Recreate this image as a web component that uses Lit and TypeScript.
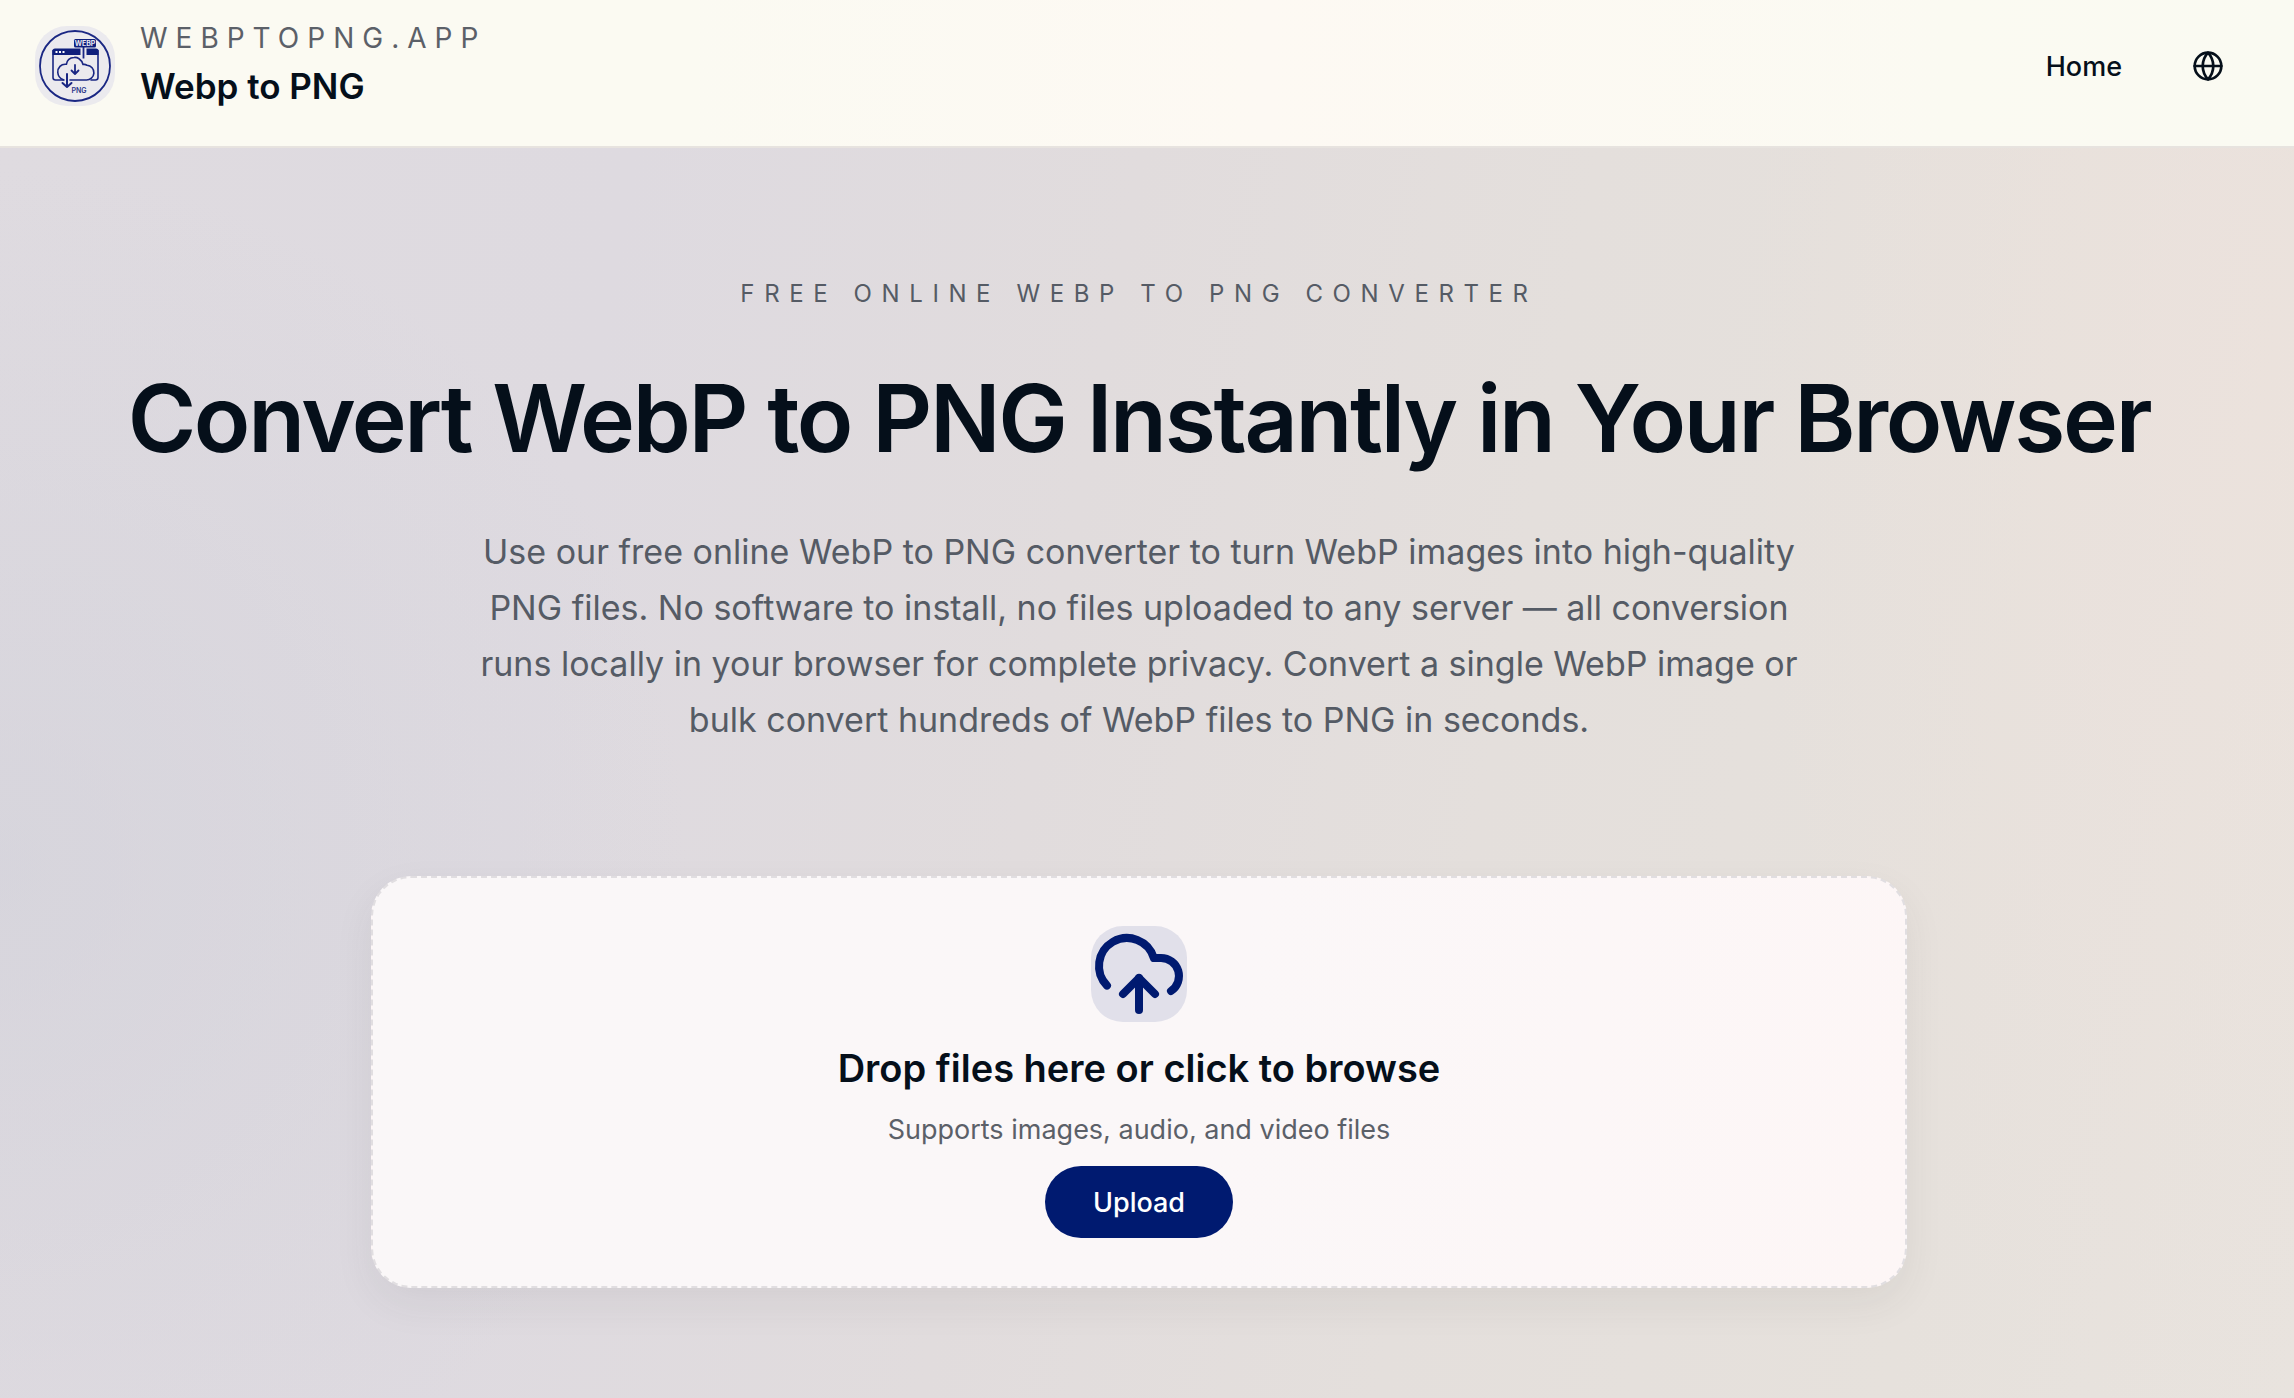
import { LitElement, html, css, svg } from "lit";
import { customElement } from "lit/decorators.js";

const logo = svg`
  <circle cx="40" cy="40" r="35" fill="none" stroke="#1a2783" stroke-width="1.8" />
  <g fill="none" stroke="#1a2783" stroke-width="1.6" stroke-linecap="round" stroke-linejoin="round">
    <path d="M29 54H20.500a2.500 2.500 0 0 1-2.500-2.500V24.500M63 24.500V51.500a2.500 2.500 0 0 1-2.500 2.500H56" />
    <path d="M35 54H51a7.200 7.200 0 0 0 1-14.800A6 6 0 0 0 48 38.500C46.500 33 42 31 39 31.500c-4 .2-7 3-7.600 6.800C26 37.500 22.500 42 22.800 46.500c.2 3.200 2.200 6 5.500 7.200" />
    <path d="M40 39v8.500M36.500 44.500l3.500 3.500 3.500-3.500" stroke-width="1.800" />
    <path d="M32 48v12.500M27.500 57l4.500 4 4.500-4" stroke-width="2" />
  </g>
  <path d="M17.500 29v-4a2.500 2.500 0 0 1 2.500-2.500h25.500V29zM51.500 22.500H61a2.500 2.500 0 0 1 2.500 2.500v4h-12z" fill="#0f1f7c" />
  <path d="M48.500 20v12.500" fill="none" stroke="#1a2783" stroke-width="1.800" />
  <path d="M20.500 25h2v2h-2zM24 25h2v2h-2zM27.500 25h2v2h-2z" fill="#fff" />
  <rect x="39" y="13" width="22" height="8.500" rx="1.500" fill="#0f1f7c" />
  <text class="logo-webp" x="50" y="19.700" text-anchor="middle" fill="#e8e8f2">WEBP</text>
  <text class="logo-png" x="44" y="67" text-anchor="middle" fill="#2a368a">PNG</text>
`;

@customElement("app-root")
export class AppRoot extends LitElement {
  static styles = css`
    :host {
      display: flex;
      flex-direction: column;
      box-sizing: border-box;
      min-height: 100vh;
      font-family: Inter, "Liberation Sans", sans-serif;
      color: #050f1a;
      background:
        radial-gradient(ellipse 30% 50% at 0% 62%, rgba(205, 206, 216, 0.45), rgba(205, 206, 216, 0) 100%),
        radial-gradient(ellipse 22% 80% at 98% 26%, rgba(238, 226, 220, 0.6), rgba(238, 226, 220, 0) 100%),
        linear-gradient(100deg, #dfdbe0 0%, #dedae0 26%, #e1dcdd 46%, #e4dfdc 64%, #e6e1dc 84%, #e8e3de 100%);
    }
    * {
      box-sizing: border-box;
    }
    h1,
    h2,
    p {
      margin: 0;
    }
    .header {
      display: flex;
      justify-content: space-between;
      align-items: flex-start;
      height: 148px;
      padding: 20px 56px 0 35px;
      border-bottom: 2px solid #e7e3df;
      background: linear-gradient(90deg, #fbfaf2 0%, #fbfaf2 30%, #fdf9f3 55%, #fbfaf2 85%, #fafaf2 100%);
    }
    .brand {
      display: flex;
      gap: 25px;
      color: inherit;
      text-decoration: none;
    }
    .logo {
      width: 80px;
      height: 80px;
      margin-top: 6px;
      border-radius: 32px;
      background: #ebeaee;
    }
    .logo-webp {
      font: 700 7px Inter, sans-serif;
    }
    .logo-png {
      font: 600 7px Inter, sans-serif;
    }
    .names {
      display: flex;
      flex-direction: column;
    }
    .domain {
      font-size: 28px;
      line-height: 36px;
      letter-spacing: 8px;
      color: #5b6068;
    }
    .name {
      margin-top: 4px;
      font-size: 35px;
      font-weight: 600;
      line-height: 52px;
    }
    .nav {
      display: flex;
      align-items: center;
      gap: 40px;
      height: 92px;
    }
    .home {
      padding: 0 16px;
      font-size: 27px;
      font-weight: 500;
      color: inherit;
      text-decoration: none;
    }
    .language {
      display: flex;
      padding: 14px;
      border: 0;
      background: none;
      color: inherit;
    }
    .main {
      display: flex;
      flex-direction: column;
      align-items: center;
      padding: 126px 16px 108px 0;
      text-align: center;
    }
    .eyebrow {
      font-size: 24px;
      line-height: 40px;
      letter-spacing: 0.4em;
      color: #555b65;
    }
    .title {
      margin-top: 56px;
      font-size: 93px;
      font-weight: 600;
      line-height: 96px;
      letter-spacing: -0.025em;
    }
    .intro {
      max-width: 1344px;
      margin-top: 58px;
      font-size: 34px;
      line-height: 56px;
      color: #555b65;
    }
    .drop {
      display: flex;
      flex-direction: column;
      align-items: center;
      width: 100%;
      max-width: 1536px;
      margin-top: 128px;
      padding: 48px;
      border: 2px dashed #e1dee1;
      border-radius: 40px;
      background: linear-gradient(100deg, #faf7f8 0%, #fbf7f8 55%, #fdf6f6 100%);
      box-shadow: 0 16px 40px rgba(60, 50, 60, 0.07);
    }
    .cloud {
      width: 96px;
      height: 96px;
      border-radius: 32px;
      background: #e1e0ea;
      color: #001a70;
    }
    .drop-title {
      margin-top: 18px;
      font-size: 38px;
      font-weight: 600;
      line-height: 56px;
    }
    .drop-note {
      margin-top: 14px;
      font-size: 27px;
      line-height: 40px;
      color: #5b6068;
    }
    .upload {
      height: 72px;
      margin-top: 16px;
      padding: 0 48px;
      border: 0;
      border-radius: 36px;
      background: #001a70;
      color: #fff;
      font-family: inherit;
      font-size: 27px;
      font-weight: 500;
    }
  `;

  render() {
    return html`
      <header class="header">
        <a class="brand" href="#">
          <svg class="logo" viewBox="0 0 80 80" aria-hidden="true">${logo}</svg>
          <span class="names">
            <span class="domain">WEBPTOPNG.APP</span>
            <span class="name">Webp to PNG</span>
          </span>
        </a>
        <nav class="nav">
          <a class="home" href="#">Home</a>
          <button class="language" type="button" aria-label="Language">
            <svg width="32" height="32" viewBox="0 0 24 24" fill="none" stroke="currentColor" stroke-width="2" stroke-linecap="round" stroke-linejoin="round">
              <circle cx="12" cy="12" r="10" />
              <path d="M2 12h20M12 2a15.300 15.300 0 0 1 4 10 15.300 15.300 0 0 1-4 10 15.300 15.300 0 0 1-4-10 15.300 15.300 0 0 1 4-10z" />
            </svg>
          </button>
        </nav>
      </header>
      <main class="main">
        <p class="eyebrow">FREE ONLINE WEBP TO PNG CONVERTER</p>
        <h1 class="title">Convert WebP to PNG Instantly in Your Browser</h1>
        <p class="intro">
          Use our free online WebP to PNG converter to turn WebP images into high-quality PNG files. No software to
          install, no files uploaded to any server — all conversion runs locally in your browser for complete privacy.
          Convert a single WebP image or bulk convert hundreds of WebP files to PNG in seconds.
        </p>
        <section class="drop">
          <svg class="cloud" viewBox="0 0 24 24" fill="none" stroke="currentColor" stroke-width="2" stroke-linecap="round" stroke-linejoin="round" aria-hidden="true">
            <path d="M12 13v8" />
            <path d="M4 14.899A7 7 0 1 1 15.710 8h1.790a4.500 4.500 0 0 1 2.500 8.242" />
            <path d="m8 17 4-4 4 4" />
          </svg>
          <h2 class="drop-title">Drop files here or click to browse</h2>
          <p class="drop-note">Supports images, audio, and video files</p>
          <button class="upload" type="button">Upload</button>
        </section>
      </main>
    `;
  }
}
